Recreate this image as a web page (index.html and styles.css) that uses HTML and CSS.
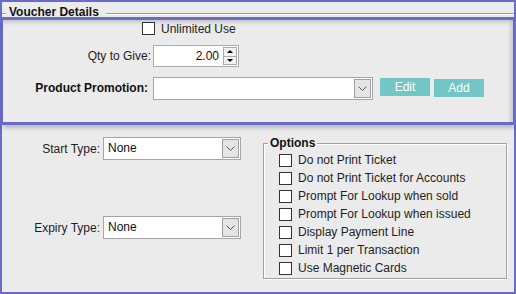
FILE: index.html
```html
<!DOCTYPE html>
<html>
<head>
<meta charset="utf-8">
<link rel="stylesheet" href="styles.css">
</head>
<body>
<div class="frame">
  <div class="group-title">
    <span class="gline short"></span>
    <span class="gtext">Voucher Details</span>
    <span class="gline long"></span>
  </div>
  <div class="panel">
    <div class="row r-unlimited"><span class="cb"></span><span class="lbl">Unlimited Use</span></div>
    <div class="row r-qty">
      <span class="flabel">Qty to Give:</span>
      <div class="spin">
        <span class="val">2.00</span>
        <div class="spinbtns"><span class="up"></span><span class="down"></span></div>
      </div>
    </div>
    <div class="row r-promo">
      <span class="flabel bold">Product Promotion:</span>
      <div class="combo wide">
        <span class="ctext"></span>
        <span class="drop"><svg width="9" height="6" viewBox="0 0 9 6"><polyline points="0.5,0.5 4.5,4.5 8.5,0.5" fill="none" stroke="#555" stroke-width="1"/></svg></span>
      </div>
      <button class="btn edit">Edit</button>
      <button class="btn add">Add</button>
    </div>
  </div>
  <div class="lower">
    <div class="types">
      <div class="trow start">
        <span class="tlabel">Start Type:</span>
        <div class="combo narrow">
          <span class="ctext">None</span>
          <span class="drop"><svg width="9" height="6" viewBox="0 0 9 6"><polyline points="0.5,0.5 4.5,4.5 8.5,0.5" fill="none" stroke="#555" stroke-width="1"/></svg></span>
        </div>
      </div>
      <div class="trow expiry">
        <span class="tlabel">Expiry Type:</span>
        <div class="combo narrow">
          <span class="ctext">None</span>
          <span class="drop"><svg width="9" height="6" viewBox="0 0 9 6"><polyline points="0.5,0.5 4.5,4.5 8.5,0.5" fill="none" stroke="#555" stroke-width="1"/></svg></span>
        </div>
      </div>
    </div>
    <div class="options">
      <span class="otitle">Options</span>
      <div class="orow"><span class="cb"></span><span class="lbl">Do not Print Ticket</span></div>
      <div class="orow"><span class="cb"></span><span class="lbl">Do not Print Ticket for Accounts</span></div>
      <div class="orow"><span class="cb"></span><span class="lbl">Prompt For Lookup when sold</span></div>
      <div class="orow"><span class="cb"></span><span class="lbl">Prompt For Lookup when issued</span></div>
      <div class="orow"><span class="cb"></span><span class="lbl">Display Payment Line</span></div>
      <div class="orow"><span class="cb"></span><span class="lbl">Limit 1 per Transaction</span></div>
      <div class="orow"><span class="cb"></span><span class="lbl">Use Magnetic Cards</span></div>
    </div>
  </div>
</div>
</body>
</html>
```

FILE: styles.css
```css
html, body {
  margin: 0;
  padding: 0;
}
body {
  width: 516px;
  height: 294px;
  overflow: hidden;
  background: #ebebeb;
  font-family: "Liberation Sans", Arial, sans-serif;
  font-size: 12px;
  color: #1e1e1e;
}
.frame {
  box-sizing: border-box;
  width: 516px;
  height: 294px;
  border: 2px solid #6a6acd;
  display: flex;
  flex-direction: column;
}
.group-title {
  flex: none;
  height: 15px;
  display: flex;
  align-items: flex-start;
}
.gline {
  height: 0;
  border-top: 1px solid #a0a0a0;
  border-bottom: 1px solid #fff;
  margin-top: 11px;
}
.gline.short { width: 4px; }
.gline.long { flex: 1; }
.gtext {
  font-weight: bold;
  line-height: 13px;
  margin-top: 4px;
  padding: 0 7px 0 3px;
  color: #111;
}
.panel {
  flex: none;
  height: 108px;
  box-sizing: border-box;
  border: 3px solid #6a6acd;
  border-left-width: 1px;
  margin-right: -2px;
  position: relative;
  z-index: 1;
  box-shadow: inset -3px 3px 4px -1px rgba(0,0,0,0.18), 0 4px 4px -1px rgba(0,0,0,0.22);
}
.row { display: flex; }
.r-unlimited {
  align-items: center;
  height: 13px;
  margin-top: 2px;
  padding-left: 139px;
}
.cb {
  flex: none;
  width: 13px;
  height: 13px;
  box-sizing: border-box;
  border: 1px solid #333;
  background: #fff;
}
.r-unlimited .lbl { margin-left: 6px; }
.r-qty {
  align-items: center;
  height: 22px;
  margin-top: 10px;
}
.flabel {
  flex: none;
  width: 148px;
  margin-right: 2px;
  text-align: right;
  line-height: 23px;
}
.flabel.bold {
  font-weight: bold;
  color: #111;
  box-sizing: border-box;
  padding-right: 3px;
}
.spin {
  width: 86px;
  height: 22px;
  box-sizing: border-box;
  border: 1px solid #abadb3;
  background: #fff;
  display: flex;
}
.val {
  flex: 1;
  text-align: right;
  padding-right: 3px;
  line-height: 20px;
  color: #111;
}
.spinbtns {
  width: 14px;
  margin: 1px;
  display: flex;
  flex-direction: column;
}
.spinbtns span {
  flex: 1;
  border: 1px solid #acacac;
  background: #f3f3f3;
  display: flex;
  align-items: center;
  justify-content: center;
}
.spinbtns .up { border-bottom-width: 0; }
.spinbtns .up::after {
  content: "";
  border-left: 3px solid transparent;
  border-right: 3px solid transparent;
  border-bottom: 3px solid #000;
}
.spinbtns .down::after {
  content: "";
  border-left: 3px solid transparent;
  border-right: 3px solid transparent;
  border-top: 3px solid #000;
}
.r-promo {
  align-items: flex-start;
  height: 23px;
  margin-top: 10px;
}
.combo {
  height: 23px;
  box-sizing: border-box;
  border: 1px solid #a5a5a5;
  background: #fff;
  padding: 1px;
  display: flex;
}
.combo.wide { width: 220px; }
.combo.narrow { width: 138px; }
.ctext {
  flex: 1;
  padding-left: 3px;
  line-height: 19px;
  color: #111;
}
.drop {
  flex: none;
  width: 17px;
  box-sizing: border-box;
  border: 1px solid #a0a0a0;
  background: #e5e5e5;
  display: flex;
  align-items: center;
  justify-content: center;
}
.btn {
  border: 0;
  padding: 0;
  width: 50px;
  height: 18px;
  background: #73c6c6;
  color: #fff;
  font: inherit;
  margin-top: 1px;
}
.btn.edit { margin-left: 7px; }
.btn.add { margin-left: 4px; margin-top: 2px; }
.lower {
  flex: 1;
  display: flex;
  align-items: flex-start;
}
.types {
  flex: none;
  width: 261px;
}
.trow {
  display: flex;
  align-items: center;
  height: 23px;
}
.trow.start { margin-top: 12px; }
.trow.expiry { margin-top: 56px; }
.tlabel {
  flex: none;
  width: 98px;
  margin-right: 3px;
  text-align: right;
}
.options {
  position: relative;
  margin-top: 18px;
  width: 244px;
  height: 136px;
  box-sizing: border-box;
  border: 1px solid #a0a0a0;
  box-shadow: 1px 1px 0 #fff, inset 1px 1px 0 #fff;
  padding: 7px 0 0 15px;
}
.otitle {
  position: absolute;
  top: -8px;
  left: 4px;
  padding: 0 2px;
  background: #ebebeb;
  font-weight: bold;
  line-height: 14px;
  color: #111;
}
.orow {
  display: flex;
  align-items: center;
  height: 18px;
}
.orow .lbl { margin-left: 6px; }
```
